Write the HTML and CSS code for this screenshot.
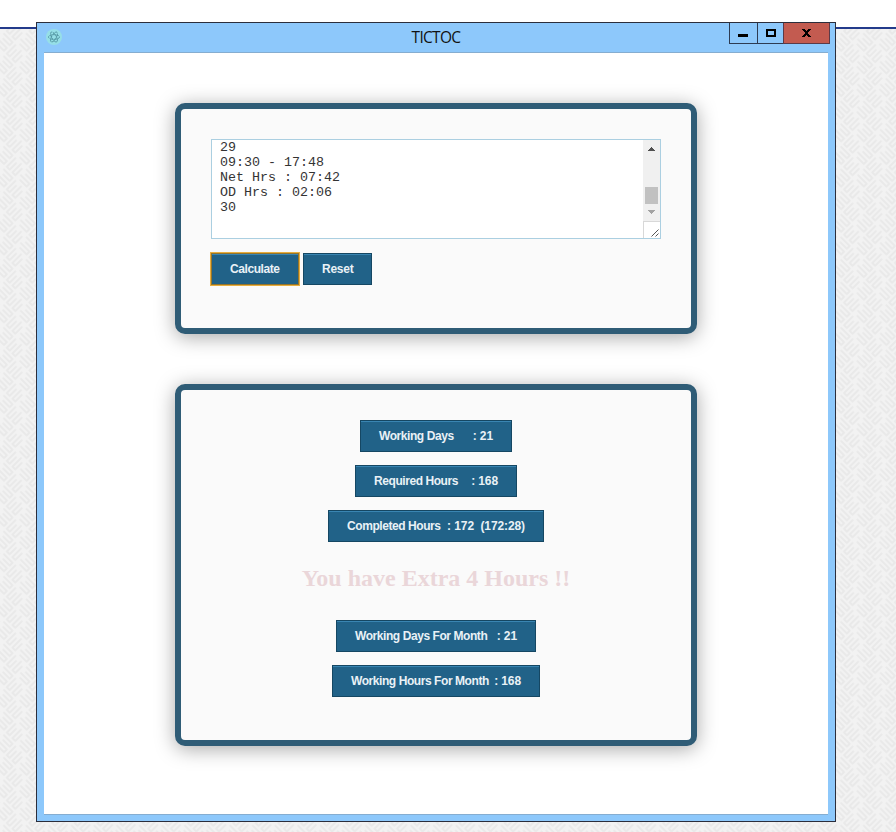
FILE: index.html
```
<!DOCTYPE html>
<html lang="en">
<head>
<meta charset="utf-8">
<title>TICTOC</title>
<link rel="stylesheet" href="styles.css">
</head>
<body>
<svg class="backdrop" aria-hidden="true">
  <defs>
    <pattern id="weave" width="32" height="32" patternUnits="userSpaceOnUse" patternTransform="translate(4 2) rotate(45)">
      <rect width="32" height="32" fill="#f2f2f2"/>
      <path d="M2 2h12v4H5M2 10h12v4H5M18 2v12h4V5M26 2v12h4V5M2 18v12h4V21M10 18v12h4V21M18 18h12v4H21M18 26h12v4H21" fill="none" stroke="#e9e9e9" stroke-width="1.9" stroke-linecap="round" stroke-linejoin="round"/>
    </pattern>
  </defs>
  <rect width="100%" height="100%" fill="url(#weave)"/>
</svg>
<div class="window">
  <header class="titlebar">
    <svg class="app-icon" viewBox="0 0 16 16">
      <circle cx="8" cy="8" r="8" fill="#96dfe7"/>
      <g fill="none" stroke="#4b8e9a" stroke-width=".8" stroke-dasharray="3 .6">
        <ellipse cx="8" cy="8" rx="5.6" ry="2.3"/>
        <ellipse cx="8" cy="8" rx="5.6" ry="2.3" transform="rotate(60 8 8)"/>
        <ellipse cx="8" cy="8" rx="5.6" ry="2.3" transform="rotate(120 8 8)"/>
      </g>
    </svg>
    <h1 class="title">TICTOC</h1>
    <div class="controls">
      <span class="control minimize"><svg width="10" height="3"><path d="M0 0h10v3H0z"/></svg></span>
      <span class="control maximize"><svg width="10" height="8"><path d="M0 0h10v8H0zM2 2v4h6V2z" fill-rule="evenodd"/></svg></span>
      <span class="control close"><svg width="9" height="8"><path d="M0 0h3v1h1v1h1V1h1V0h3v1H8v1H7v1H6v2h1v1h1v1h1v1H6V7H5V6H4v1H3v1H0V7h1V6h1V5h1V3H2V2H1V1H0z"/></svg></span>
    </div>
  </header>
  <main class="content">
    <section class="card entry">
      <div class="log">
        <pre class="log-text">29
09:30 - 17:48
Net Hrs : 07:42
OD Hrs : 02:06
30</pre>
        <div class="scroll">
          <div class="track">
            <svg width="7" height="4"><path d="M3 0h1v1h1v1h1v1h1v1H0V3h1V2h1V1h1z" fill="#505050"/></svg>
            <div class="thumb"></div>
            <svg width="7" height="4"><path d="M0 0h7v1H6v1H5v1H4v1H3V3H2V2H1V1H0z" fill="#a3a3a3"/></svg>
          </div>
          <div class="grip"><svg width="8" height="8"><path d="M.5 7.5l7-7M4.5 7.5l3-3" stroke="#555" fill="none"/></svg></div>
        </div>
      </div>
      <div class="actions">
        <button class="btn calculate">Calculate</button>
        <button class="btn reset">Reset</button>
      </div>
    </section>
    <section class="card results">
      <div class="btn days"><span>Working Days</span><span class="value">: 21</span></div>
      <div class="btn required"><span>Required Hours</span><span class="value">: 168</span></div>
      <div class="btn completed"><span>Completed Hours</span><span class="value">: 172&nbsp; (172:28)</span></div>
      <h2 class="message">You have Extra 4 Hours !!</h2>
      <div class="btn month-days"><span>Working Days For Month</span><span class="value">: 21</span></div>
      <div class="btn month-hours"><span>Working Hours For Month</span><span class="value">: 168</span></div>
    </section>
  </main>
</div>
</body>
</html>
```
FILE: styles.css
```
* { box-sizing: border-box; }
body {
  margin: 0;
  height: 832px;
  padding: 22px 60px 10px 36px;
  background: linear-gradient(#fff 27px, #233b8b 27px, #233b8b 29px, #f0f0f0 29px);
  overflow: hidden;
}
.backdrop {
  position: absolute;
  z-index: -1;
  left: 0;
  top: 29px;
  width: 896px;
  height: 803px;
}
svg { display: block; }
.window {
  display: flex;
  flex-direction: column;
  height: 800px;
  border: 1px solid #2b2e3c;
  padding: 0 7px 6px;
  background: #8dc8fb;
}
.titlebar {
  display: grid;
  grid-template-columns: 102px 1fr 102px;
  flex: 0 0 29px;
}
.app-icon { width: 16px; height: 16px; margin: 6px 0 0 2px; }
.title {
  margin: 0;
  font: 15.5px/29px "Open Sans", sans-serif;
  letter-spacing: -0.7px;
  text-align: center;
  color: #111;
}
.controls {
  display: flex;
  width: 102px;
  height: 21px;
  margin-left: 2px;
  padding-left: 1px;
}
.control {
  display: flex;
  justify-content: center;
  align-items: center;
  border: solid #2d3b52;
  border-width: 0 0 1px 1px;
}
.minimize { width: 28px; padding: 4px 1px 0 0; }
.maximize { width: 26px; }
.close { width: 47px; border-right-width: 1px; border-color: #5b3a48; background: #c35b50; }
.content {
  flex: 1;
  padding: 50px 131px;
  border: solid #85add0;
  border-width: 1px 0;
  background: #fff;
}
.card {
  border: 6px solid #2f5c76;
  border-radius: 10px;
  padding: 30px;
  background: #fafafa;
  box-shadow: 0 3px 20px rgba(0, 0, 0, .35);
}
.entry { height: 231px; margin-bottom: 50px; }
.log {
  display: flex;
  justify-content: space-between;
  height: 100px;
  border: 1px solid #abcfe1;
  background: #fff;
}
.log-text {
  margin: 0;
  padding: 0 8px;
  font: 13.333px/15px "Liberation Mono", monospace;
  color: #333;
}
.scroll { width: 17px; display: flex; flex-direction: column; }
.track {
  flex: 1;
  display: flex;
  flex-direction: column;
  align-items: center;
  padding-top: 7px;
  background: #f0f0f0;
}
.thumb { width: 13px; height: 17px; margin: 36px 0 6px; background: #c1c1c1; }
.grip {
  display: flex;
  justify-content: flex-end;
  align-items: flex-end;
  height: 17px;
  padding: 0 1px 1px 0;
  border: solid #d8d8d8;
  border-width: 1px 0 0 1px;
}
.actions { display: flex; gap: 4px; margin-top: 14px; }
.btn {
  display: flex;
  justify-content: space-between;
  align-items: center;
  height: 32px;
  padding: 0 18px;
  border: 1px solid #154763;
  background: #216288;
  box-shadow: inset 0 1px 0 #3985b2;
  font: bold 12px "Liberation Sans", Arial, sans-serif;
  letter-spacing: -0.43px;
  white-space: nowrap;
  color: #e9f1f6;
}
.value { letter-spacing: -0.1px; }
.calculate {
  width: 88px;
  border-color: #94742b;
  outline: 1px solid #e9ae3d;
  outline-offset: 0;
}
.reset { width: 69px; letter-spacing: -0.25px; }
.results {
  display: flex;
  flex-direction: column;
  align-items: center;
  gap: 13px;
  height: 362px;
}
.days { width: 152px; }
.required { width: 162px; }
.completed { width: 216px; }
.month-days { width: 200px; }
.month-hours { width: 208px; }
.message {
  margin: 10px 0 16px;
  font: bold 24px/26px "Liberation Serif", serif;
  color: #ead6d9;
  white-space: nowrap;
}
```
